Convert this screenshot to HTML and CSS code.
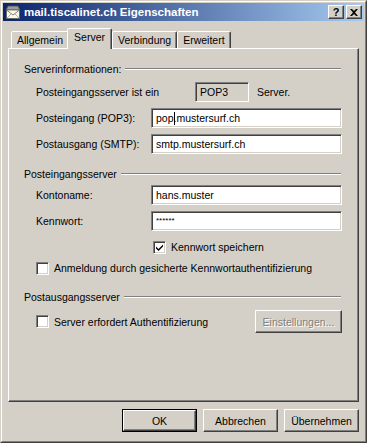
FILE: index.html
```html
<!DOCTYPE html>
<html lang="de">
<head>
    <meta charset="UTF-8">
    <title>mail.tiscalinet.ch Eigenschaften</title>
    <link rel="stylesheet" href="styles.css">
</head>
<body>
    <div class="window">
        <div class="window-inner">
            <div class="titlebar">
                <svg class="title-icon" width="16" height="16" viewBox="0 0 16 16">
                    <path d="M3 2 L13 2 L15 6 L1 6 Z" fill="#9a9a9a" stroke="#505050" stroke-width="0.8"/>
                    <rect x="1.5" y="6" width="13" height="8.5" fill="#fffbe8" stroke="#606060" stroke-width="0.8"/>
                    <path d="M1.5 6 L8 11 L14.5 6" fill="none" stroke="#606060" stroke-width="0.8"/>
                    <path d="M1.5 14.5 L6 10 M14.5 14.5 L10 10" fill="none" stroke="#808080" stroke-width="0.6"/>
                </svg>
                <span class="title-text">mail.tiscalinet.ch Eigenschaften</span>
                <div class="caption-btns">
                    <div class="caption-btn">?</div>
                    <div class="caption-btn close">
                        <svg width="8" height="7" viewBox="0 0 8 7">
                            <path d="M0 0 L2 0 L4 2 L6 0 L8 0 L5 3.5 L8 7 L6 7 L4 5 L2 7 L0 7 L3 3.5 Z" fill="#000"/>
                        </svg>
                    </div>
                </div>
            </div>

            <div class="dialog">
                <div class="tabs">
                    <div class="tab">Allgemein</div>
                    <div class="tab selected">Server</div>
                    <div class="tab">Verbindung</div>
                    <div class="tab">Erweitert</div>
                </div>

                <div class="panel">
                    <div class="group-head first">
                        <span>Serverinformationen:</span>
                        <div class="etched"></div>
                    </div>
                    <div class="row first-row">
                        <span class="label long">Posteingangsserver ist ein</span>
                        <div class="field readonly">POP3</div>
                        <span class="after">Server.</span>
                    </div>
                    <div class="row">
                        <span class="label">Posteingang (POP3):</span>
                        <div class="field wide">pop<span class="caret"></span>.mustersurf.ch</div>
                    </div>
                    <div class="row">
                        <span class="label">Postausgang (SMTP):</span>
                        <div class="field wide">smtp.mustersurf.ch</div>
                    </div>

                    <div class="group-head second">
                        <span>Posteingangsserver</span>
                        <div class="etched"></div>
                    </div>
                    <div class="row tight">
                        <span class="label">Kontoname:</span>
                        <div class="field wide">hans.muster</div>
                    </div>
                    <div class="row">
                        <span class="label">Kennwort:</span>
                        <div class="field wide password">******</div>
                    </div>
                    <div class="check-row save-pw">
                        <span class="checkbox">
                            <svg width="9" height="9" viewBox="0 0 9 9">
                                <path d="M1 3.5 L3.5 6 L8 1.5 L8 3.5 L3.5 8 L1 5.5 Z" fill="#000"/>
                            </svg>
                        </span>
                        <span>Kennwort speichern</span>
                    </div>
                    <div class="check-row spa">
                        <span class="checkbox"></span>
                        <span>Anmeldung durch gesicherte Kennwortauthentifizierung</span>
                    </div>

                    <div class="group-head third">
                        <span>Postausgangsserver</span>
                        <div class="etched"></div>
                    </div>
                    <div class="check-row smtp-auth">
                        <span class="checkbox"></span>
                        <span>Server erfordert Authentifizierung</span>
                        <div class="btn disabled settings">Einstellungen...</div>
                    </div>
                </div>

                <div class="buttons">
                    <div class="default-frame"><div class="btn">OK</div></div>
                    <div class="btn">Abbrechen</div>
                    <div class="btn">Übernehmen</div>
                </div>
            </div>
        </div>
    </div>
</body>
</html>
```

FILE: styles.css
```css
html, body {
    margin: 0;
    padding: 0;
}
body {
    background: #d4d0c8;
    font-family: "Liberation Sans", Arial, sans-serif;
    font-size: 10.5px;
    color: #000;
}
.window {
    width: 367px;
    height: 443px;
    box-sizing: border-box;
    border: 1px solid;
    border-color: #d4d0c8 #404040 #404040 #d4d0c8;
}
.window-inner {
    height: 100%;
    box-sizing: border-box;
    border: 1px solid;
    border-color: #fff #808080 #808080 #fff;
    padding: 1px;
}

/* title bar */
.titlebar {
    height: 18px;
    display: flex;
    align-items: center;
    background: linear-gradient(to right, #0a246a, #a6caf0);
    padding: 0 2px 0 2px;
}
.title-icon {
    margin-right: 3px;
}
.title-text {
    color: #fff;
    font-weight: bold;
    font-size: 11.5px;
    flex: 1;
}
.caption-btns {
    display: flex;
    gap: 2px;
}
.caption-btn {
    width: 16px;
    height: 14px;
    box-sizing: border-box;
    background: #d4d0c8;
    border: 1px solid;
    border-color: #fff #404040 #404040 #fff;
    box-shadow: inset -1px -1px #808080;
    display: flex;
    align-items: center;
    justify-content: center;
    font-weight: bold;
    font-size: 11px;
    line-height: 1;
}

/* tabs */
.dialog {
    padding: 7px 5px 0 5px;
}
.tabs {
    display: flex;
    align-items: flex-end;
    padding-left: 3px;
    height: 20px;
    position: relative;
    z-index: 1;
}
.tab {
    height: 17px;
    box-sizing: border-box;
    padding: 2px 5px 0 5px;
    border: 1px solid;
    border-bottom: none;
    border-color: #fff #404040 transparent #fff;
    box-shadow: inset -1px 0 #808080;
    border-radius: 2px 2px 0 0;
    background: #d4d0c8;
}
.tab.selected {
    height: 21px;
    margin: 0 -1px -1px -2px;
    padding: 2px 6px 0 6px;
    position: relative;
    z-index: 2;
}
.tab.selected + .tab {
    margin-left: 1px;
}

.panel {
    height: 354px;
    box-sizing: border-box;
    border: 1px solid;
    border-color: #fff #404040 #404040 #fff;
    box-shadow: inset -1px -1px #808080;
    padding: 0 17px 0 15px;
}

/* group headers */
.group-head {
    display: flex;
    align-items: center;
    height: 14px;
}
.group-head.first { margin-top: 13px; }
.group-head.second { margin-top: 13px; }
.group-head.third { margin-top: 15px; }
.group-head span {
    padding-right: 4px;
}
.etched {
    flex: 1;
    border-top: 1px solid #808080;
    border-bottom: 1px solid #fff;
}

/* rows */
.row {
    display: flex;
    align-items: center;
    height: 20px;
    margin-top: 6px;
    padding-left: 12px;
}
.row.tight { margin-top: 4px; }
.label {
    width: 115px;
    white-space: nowrap;
}
.label.long {
    width: 159px;
}
.field {
    height: 20px;
    box-sizing: border-box;
    border: 1px solid;
    border-color: #808080 #fff #fff #808080;
    box-shadow: inset 1px 1px #404040, inset -1px -1px #d4d0c8;
    background: #fff;
    padding: 3px 0 0 4px;
    white-space: nowrap;
}
.field.readonly {
    background: #d4d0c8;
    width: 54px;
}
.after {
    margin-left: 8px;
}
.field.wide {
    flex: 1;
    margin-right: -1px;
}
.field.password {
    font-size: 8px;
    padding-top: 4px;
}
.caret {
    display: inline-block;
    width: 1px;
    height: 13px;
    background: #000;
    vertical-align: -3px;
    margin-right: -1px;
}

/* checkboxes */
.check-row {
    display: flex;
    align-items: center;
    height: 14px;
    padding-left: 12px;
    white-space: nowrap;
}
.check-row.save-pw {
    margin-top: 9px;
    padding-left: 129px;
}
.check-row.spa { margin-top: 7px; }
.check-row.smtp-auth {
    margin-top: 6px;
    height: 23px;
}
.checkbox {
    width: 13px;
    height: 13px;
    box-sizing: border-box;
    border: 1px solid;
    border-color: #808080 #fff #fff #808080;
    box-shadow: inset 1px 1px #404040, inset -1px -1px #d4d0c8;
    background: #fff;
    margin-right: 5px;
    display: flex;
    align-items: center;
    justify-content: center;
}

/* buttons */
.btn {
    width: 75px;
    height: 23px;
    box-sizing: border-box;
    border: 1px solid;
    border-color: #fff #404040 #404040 #fff;
    box-shadow: inset -1px -1px #808080;
    background: #d4d0c8;
    display: flex;
    align-items: center;
    justify-content: center;
}
.btn.settings {
    width: 87px;
    margin-left: auto;
    margin-right: -1px;
}
.btn.disabled {
    color: #808080;
    text-shadow: 1px 1px #fff;
}
.buttons {
    display: flex;
    justify-content: flex-end;
    gap: 6px;
    margin-top: 7px;
}
.default-frame {
    border: 1px solid #000;
}
.default-frame .btn {
    width: 73px;
    height: 21px;
}
```
